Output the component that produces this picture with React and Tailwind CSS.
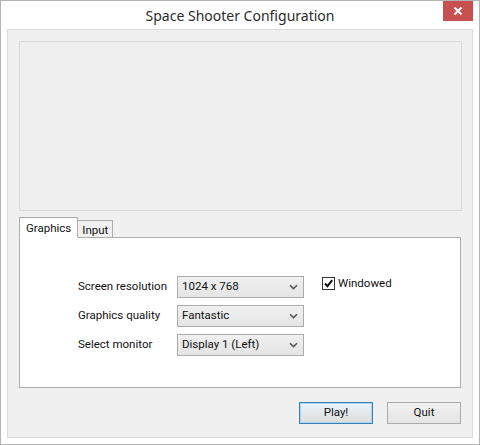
const font = { fontFamily: 'Roboto, "Noto Sans", sans-serif' };

function Chevron() {
  return (
    <svg width="9" height="6" viewBox="0 0 9 6" className="shrink-0">
      <path d="M1 1.2 L4.5 4.6 L8 1.2" fill="none" stroke="#555" strokeWidth="1.6" />
    </svg>
  );
}

function Select({ value }) {
  return (
    <div className="w-[127px] h-[22px] flex items-center justify-between pl-[4px] pr-[5px] border border-[#acacac] bg-gradient-to-b from-[#f0f0f0] to-[#e5e5e5] text-[11.5px] text-[#111]">
      <span>{value}</span>
      <Chevron />
    </div>
  );
}

function Row({ label, value, children }) {
  return (
    <div className="flex items-center h-[22px]">
      <span className="w-[99px] text-[11.5px] text-[#111]">{label}</span>
      <Select value={value} />
      {children}
    </div>
  );
}

export default function App() {
  return (
    <div style={font} className="w-[480px] h-[445px] bg-white border border-[#b4b4b4] flex flex-col">
      <div className="relative h-[28px] shrink-0 flex items-center justify-center">
        <span className="text-[14px] text-[#2b2b2b] mt-[1px] font-['Noto_Sans',sans-serif]">
          Space Shooter Configuration
        </span>
        <div className="absolute right-[6px] top-0 w-[30px] h-[20px] bg-[#c75050] flex items-center justify-center">
          <svg width="10" height="10" viewBox="0 0 10 10">
            <path d="M1.5 1.5 L8.5 8.5 M8.5 1.5 L1.5 8.5" stroke="white" strokeWidth="2" />
          </svg>
        </div>
      </div>

      <div className="mx-[6px] mb-[6px] flex-1 border border-[#dadada] bg-[#f0f0f0] flex flex-col pt-[11px] pl-[11px] pr-[10px]">
        <div className="h-[170px] border border-[#d9d9d9] bg-[#efefef]" />

        <div className="mt-[6px] flex items-end h-[20px] relative z-10">
          <div className="h-[21px] -mb-px px-[6px] pt-[2px] border border-[#acacac] border-b-white bg-white text-[11.5px] text-[#111]">
            Graphics
          </div>
          <div className="h-[17px] px-[4px] border border-l-0 border-[#acacac] border-b-0 bg-[#f0f0f0] text-[11.5px] text-[#111] leading-[18px]">
            Input
          </div>
        </div>
        <div className="w-[442px] h-[151px] border border-[#acacac] bg-white pl-[58px] pt-[38px] flex flex-col gap-[7px]">
          <Row label="Screen resolution" value="1024 x 768">
            <div className="ml-[18px] flex items-center gap-[3px] self-start">
              <div className="w-[13px] h-[13px] border border-[#333] bg-white flex items-center justify-center">
                <svg width="11" height="11" viewBox="0 0 11 11">
                  <path d="M2 5.5 L4.5 8.2 L9.2 2.2" fill="none" stroke="#111" strokeWidth="2" />
                </svg>
              </div>
              <span className="text-[11.5px] text-[#111] leading-[14px]">Windowed</span>
            </div>
          </Row>
          <Row label="Graphics quality" value="Fantastic" />
          <Row label="Select monitor" value="Display 1 (Left)" />
        </div>

        <div className="mt-[14px] flex justify-end gap-[14px] pr-[1px]">
          <div className="w-[74px] h-[22px] border border-[#3c7fb1] bg-gradient-to-b from-[#eaf4fb] to-[#dcdcdc] shadow-[inset_0_0_0_1px_#a8d3f2] flex items-center justify-center text-[11.5px] text-[#111]">
            Play!
          </div>
          <div className="w-[74px] h-[22px] border border-[#acacac] bg-gradient-to-b from-[#f0f0f0] to-[#e5e5e5] flex items-center justify-center text-[11.5px] text-[#111]">
            Quit
          </div>
        </div>
      </div>
    </div>
  );
}
